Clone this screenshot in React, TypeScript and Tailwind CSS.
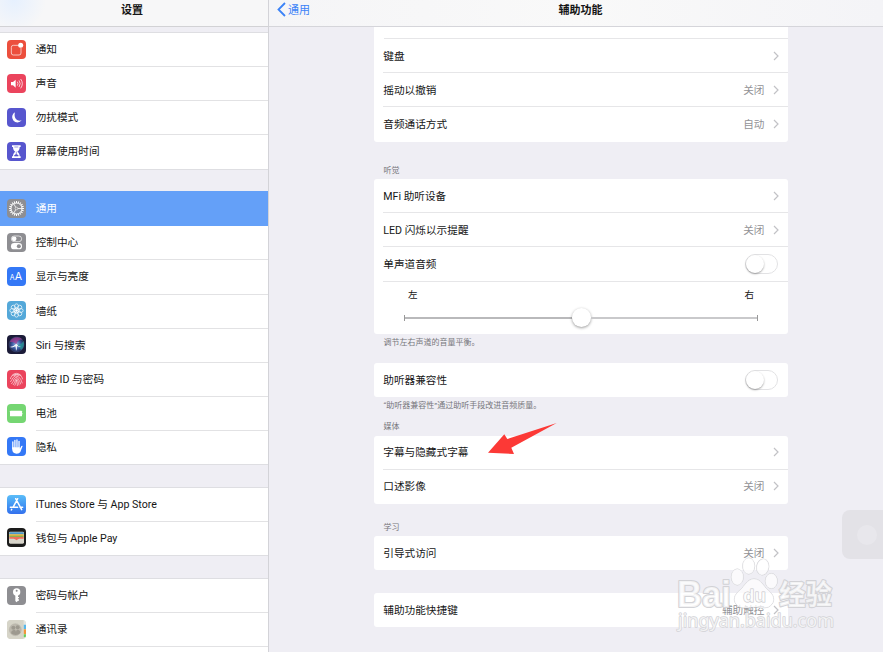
import type { ReactNode } from "react";
import clsx from "clsx";

type Item = { label: string; icon: ReactNode; bg: string; active?: boolean };

const rays = (n: number) => Array.from({ length: n }, (_, i) => (i * 360) / n);

const NotificationIcon = () => (
  <>
    <path d="M34 16H19a6 6 0 0 0-6 6v17a6 6 0 0 0 6 6h17a6 6 0 0 0 6-6V24" fill="none" stroke="#fff" strokeWidth="2" />
    <circle cx="41" cy="16" r="7.5" fill="#fff" />
  </>
);

const SoundIcon = () => (
  <>
    <path d="M12 24h6l8-7v24l-8-7h-6z" fill="#fff" />
    <path d="M31 23q4 6 0 12M36 19q7 10 0 20M41 15q10 14 0 28" fill="none" stroke="#fff" strokeWidth="2.2" />
  </>
);

const MoonIcon = () => (
  <path d="M24 13a16 16 0 1 0 20 24C30 42 19 29 24 13z" fill="#fff" />
);

const HourglassIcon = () => (
  <>
    <path d="M15 10h26v5h-3c0 8-3 11-7 14 4 3 7 6 7 14h3v5H15v-5h3c0-8 3-11 7-14-4-3-7-6-7-14h-3z" fill="#fff" />
    <path d="M22 15h12M28 29v8M22 42c1-3 4-4 6-5 2 1 5 2 6 5z" fill="#5756ce" stroke="#5756ce" strokeWidth="1.8" />
  </>
);

const GearIcon = () => (
  <>
    <g stroke="#fff" strokeWidth="3">
      {rays(20).map((a) => (
        <path key={a} d="M28.5 6v6" transform={`rotate(${a} 28.5 28.5)`} />
      ))}
    </g>
    <circle cx="28.5" cy="28.5" r="16.5" fill="none" stroke="#fff" strokeWidth="3" />
    <circle cx="28.5" cy="28.5" r="4" fill="none" stroke="#fff" strokeWidth="1.5" />
    <path d="M32 28.5h13M26.5 25.5 20 14M26.5 31.5 20 43" stroke="#fff" strokeWidth="2.4" />
  </>
);

const ControlIcon = () => (
  <>
    <rect x="13" y="9" width="31" height="17" rx="8.5" fill="none" stroke="#fff" strokeWidth="2" />
    <circle cx="21.5" cy="17.5" r="7" fill="#fff" />
    <rect x="12" y="30" width="33" height="19" rx="9.5" fill="#fff" />
    <circle cx="35.5" cy="39.5" r="6" fill="#8e8e92" />
  </>
);

const TextSizeIcon = () => (
  <g fill="#fff" className="font-['Inter']">
    <text x="8" y="38" fontSize="21">A</text>
    <text x="23" y="38" fontSize="32">A</text>
  </g>
);

const WallpaperIcon = () => (
  <g fill="none" stroke="#fff" strokeWidth="2">
    {rays(8).map((a) => (
      <ellipse key={a} cx="28.5" cy="16" rx="6" ry="7.5" transform={`rotate(${a} 28.5 28.5)`} />
    ))}
    <circle cx="28.5" cy="28.5" r="8" />
    <circle cx="28.5" cy="28.5" r="3" fill="#fff" />
  </g>
);

const SiriIcon = () => (
  <>
    <defs>
      <radialGradient id="siri">
        <stop offset="0" stopColor="#9db8e4" />
        <stop offset="0.55" stopColor="#3d5fa6" />
        <stop offset="1" stopColor="#20264e" />
      </radialGradient>
    </defs>
    <circle cx="28.5" cy="28.5" r="23" fill="url(#siri)" />
    <path d="M8 22C14 5 38 2 46 14 38 13 30 18 28 28 21 21 14 20 8 22z" fill="#a8388f" opacity=".7" />
    <path d="M49 18c5 12 0 22-7 27-3-6-7-12-13-16 9 1 17-3 20-11z" fill="#289b9a" opacity=".75" />
    <path d="M8 36q12-1 20-10 5 10 18 8-10 3-16-1 1 9-3 15 0-9-2-14-7 5-17 2z" fill="#fff" opacity=".9" />
    <circle cx="28.5" cy="28.5" r="22.5" fill="none" stroke="#7186b5" strokeWidth="1" opacity=".6" />
  </>
);

const FingerprintIcon = () => (
  <g fill="none" stroke="#fff" strokeWidth="1.9" opacity=".9">
    <path d="M14 17Q28 3 43 17M10 27Q13 14 28 13T47 28M10 36Q16 28 17 24 24 13 34 20 42 25 46 40" />
    <path d="M13 42Q20 34 21 27 28 17 34 27 40 36 41 43M18 45Q25 36 25 29 28 23 31 29 36 38 36 46M23 47Q28 40 28 29 32 40 31 48" />
    <path d="M20 17q8-6 17 0" />
  </g>
);

const BatteryIcon = () => (
  <>
    <rect x="9" y="20" width="36" height="17" rx="2" fill="#fff" />
    <path d="M46.5 25.5q4 3.5 0 7z" fill="#fff" />
  </>
);

const HandIcon = () => (
  <>
    <g stroke="#fff" strokeWidth="3.8" strokeLinecap="round">
      <path d="M17.5 15v20M23.7 10v22M29.9 9v22M36.1 13v22" />
    </g>
    <path d="M15.6 31H38v5l5-9q3-2 4 0l-7 18q-3 5-11 5-13 0-13.4-13z" fill="#fff" />
  </>
);

const AppStoreIcon = () => (
  <g stroke="#fff" strokeWidth="4.4" strokeLinecap="round" fill="none">
    <path d="M32 11 18 37M26 11l16 29 2 4M10 37h22M39 37h8M14 43l-1 2" />
  </g>
);

const WalletIcon = () => (
  <>
    <rect x="6" y="11" width="45" height="36" rx="4" fill="#d8d5cb" />
    <path d="M7 16q0-3 3-3h37q3 0 3 3v3H7z" fill="#4a96c9" />
    <path d="M7 19h43v5H7z" fill="#e0b53e" />
    <path d="M7 23h43v4H7z" fill="#8fae50" />
    <path d="M7 27h43v5H37q-3 0-4 2-4 5-9 0-1-2-4-2H7z" fill="#ee6e5b" />
  </>
);

const KeyIcon = () => (
  <>
    <circle cx="29" cy="18" r="11" fill="#fff" />
    <path d="M25 26h8v18l-4 5-4-4z M32 33h4v4h-4z M32 40h4v4h-4z" fill="#fff" />
    <circle cx="29" cy="14" r="3" fill="#8e8e92" />
  </>
);

const ContactsIcon = () => (
  <>
    <path d="M49 0h8v57h-8z" fill="#e5e5df" />
    <path d="M50 14h7v13h-7z" fill="#58b7ea" />
    <path d="M50 28h7v14h-7z" fill="#f1963b" />
    <path d="M50 43h7v9h-7z" fill="#69cc58" />
    <path d="M0 0h49v57H0z" fill="#d6d4c8" />
    <circle cx="25" cy="29" r="18" fill="#bdb9ae" stroke="#aaa79d" />
    <circle cx="19" cy="23" r="6" fill="#9d998f" />
    <circle cx="32" cy="22" r="6" fill="#9d998f" />
    <path d="M12 40q1-9 6-9l4-2q5 1 5 7 0-5 3-7h5q5 2 5 10-6 6-14 6T12 40z" fill="#9d998f" />
  </>
);

const groups: Item[][] = [
  [
    { label: "通知", icon: <NotificationIcon />, bg: "bg-[#ec4f3d]" },
    { label: "声音", icon: <SoundIcon />, bg: "bg-[#eb445d]" },
    { label: "勿扰模式", icon: <MoonIcon />, bg: "bg-[#5756ce]" },
    { label: "屏幕使用时间", icon: <HourglassIcon />, bg: "bg-[#5756ce]" },
  ],
  [
    { label: "通用", icon: <GearIcon />, bg: "bg-[#8e8e92]", active: true },
    { label: "控制中心", icon: <ControlIcon />, bg: "bg-[#8e8e92]" },
    { label: "显示与亮度", icon: <TextSizeIcon />, bg: "bg-[#3478f6]" },
    { label: "墙纸", icon: <WallpaperIcon />, bg: "bg-[#54a8d9]" },
    { label: "Siri 与搜索", icon: <SiriIcon />, bg: "bg-[#1b1b38]" },
    { label: "触控 ID 与密码", icon: <FingerprintIcon />, bg: "bg-[#eb445d]" },
    { label: "电池", icon: <BatteryIcon />, bg: "bg-[#75d672]" },
    { label: "隐私", icon: <HandIcon />, bg: "bg-[#3478f6]" },
  ],
  [
    { label: "iTunes Store 与 App Store", icon: <AppStoreIcon />, bg: "bg-linear-to-b from-[#5bbdf8] to-[#3470ed]" },
    { label: "钱包与 Apple Pay", icon: <WalletIcon />, bg: "bg-[#1c1c1c]" },
  ],
  [
    { label: "密码与帐户", icon: <KeyIcon />, bg: "bg-[#8e8e92]" },
    { label: "通讯录", icon: <ContactsIcon />, bg: "bg-[#d6d4c8]" },
    { label: "", icon: null, bg: "bg-white" },
  ],
];

function SidebarRow({ item, last }: { item: Item; last: boolean }) {
  return (
    <div
      className={clsx(
        "flex shrink-0 items-center pl-[6.7px]",
        last ? "h-[33.15px]" : "h-[34.15px]",
        item.active ? "bg-[#64a0f8] text-white" : "bg-white"
      )}
    >
      <span className={clsx("mb-[1.6px] h-[19px] w-[19px] shrink-0 overflow-hidden rounded-[4px]", item.bg)}>
        <svg viewBox="0 0 57 57" className="block h-[19px] w-[19px]">{item.icon}</svg>
      </span>
      <div
        className={clsx(
          "ml-[10px] flex h-full flex-1 items-center pt-[0.8px]",
          !last && "border-b",
          item.active ? "border-transparent" : "border-[#e2e2e4]"
        )}
      >
        {item.label}
      </div>
    </div>
  );
}

function Sidebar() {
  return (
    <aside className="flex h-full w-[269px] shrink-0 flex-col overflow-hidden border-r border-[#d3d3d8]">
      <header className="flex h-[27px] shrink-0 justify-center border-b border-[#d2d2d5] bg-[#f7f7f8] bg-[radial-gradient(circle_at_14px_0px,#e6f0fe,#f7f7f800_32px)] pr-[4px] pt-[3px] text-[11px] font-bold">
        设置
      </header>
      <div className="flex flex-col gap-[21.6px] pt-[5px]">
        {groups.map((group, i) => (
          <div key={i} className={clsx("border-y border-b-[#dedee2]", group[0].active ? "border-t-[#64a0f8]" : "border-t-[#dedee2]")}>
            {group.map((item, j) => (
              <SidebarRow key={j} item={item} last={j === group.length - 1} />
            ))}
          </div>
        ))}
      </div>
    </aside>
  );
}

const Chevron = () => (
  <svg viewBox="0 0 6 10" className="ml-[8px] h-[10px] w-[6px]">
    <path d="m1 1 4 4-4 4" fill="none" stroke="#c2c2c6" strokeWidth="1.2" />
  </svg>
);

const Toggle = () => (
  <span className="mr-[0.8px] flex h-[20px] w-[33px] rounded-full border border-[#e2e2e4] bg-white">
    <span className="h-[18px] w-[18px] rounded-full bg-white shadow-[0_1px_2px_rgba(0,0,0,0.35)]" />
  </span>
);

function Row({ label, value, toggle, last }: { label: string; value?: string; toggle?: boolean; last?: boolean }) {
  return (
    <div className={clsx("ml-[9.3px] flex h-[34.2px] items-center border-b pr-[9.5px]", last ? "border-transparent" : "border-[#e6e6e8]")}>
      <span className="flex-1 pt-[2px]">{label}</span>
      {value && <span className="pt-[2px] text-[#929296]">{value}</span>}
      {toggle ? <Toggle /> : <Chevron />}
    </div>
  );
}

function Card({ children }: { children: ReactNode }) {
  return <section className="overflow-hidden rounded-[3px] bg-white">{children}</section>;
}

function Note({ children, className }: { children: ReactNode; className: string }) {
  return <p className={clsx("flex items-center pl-[9.5px] text-[8px] leading-none text-[#77777c]", className)}>{children}</p>;
}

function Balance() {
  return (
    <div className="h-[52.5px] px-[30px] pt-[5px]">
      <div className="flex justify-between pl-[4px] pr-[4px] text-[9.5px] leading-[15px]">
        <span>左</span>
        <span>右</span>
      </div>
      <div className="mt-[6.6px] flex h-[19px] items-center">
        <span className="h-[6px] w-px bg-[#999]" />
        <span className="h-[2px] flex-1 bg-[#b9b9bb]" />
        <span className="h-[19px] w-[19px] rounded-full bg-white shadow-[0_1px_3px_rgba(0,0,0,0.4)]" />
        <span className="h-[2px] flex-1 bg-[#c9c9cb]" />
        <span className="h-[6px] w-px bg-[#999]" />
      </div>
    </div>
  );
}

function Detail() {
  return (
    <main className="flex min-w-0 flex-1 flex-col">
      <header className="grid h-[27px] shrink-0 grid-cols-3 border-b border-[#d5d5da] bg-linear-to-r from-[#f5f5f7] via-[#f9f9f9] to-[#f4f4f7] pt-[2px] text-[11px]">
        <div className="flex items-start text-[#3b82f7]">
          <svg viewBox="0 0 9 15" className="ml-[7.5px] mr-[2.5px] h-[15px] w-[9px]">
            <path d="M8 1 1.5 7.5 8 14" fill="none" stroke="currentColor" strokeWidth="1.8" />
          </svg>
          <span className="pt-px">通用</span>
        </div>
        <h1 className="pl-[9px] pt-px text-center font-bold">辅助功能</h1>
      </header>
      <div className="ml-[105px] w-[414px]">
        <section className="rounded-b-[3px] bg-white">
          <div className="ml-[9.5px] h-[12px] border-b border-[#e6e6e8]" />
          <Row label="键盘" />
          <Row label="摇动以撤销" value="关闭" />
          <Row label="音频通话方式" value="自动" last />
        </section>
        <Note className="h-[37.4px] pt-[21.5px]">听觉</Note>
        <Card>
          <Row label="MFi 助听设备" />
          <Row label="LED 闪烁以示提醒" value="关闭" />
          <Row label="单声道音频" toggle />
          <Balance />
        </Card>
        <Note className="h-[29px] pb-[10.8px]">调节左右声道的音量平衡。</Note>
        <Card>
          <Row label="助听器兼容性" toggle last />
        </Card>
        <Note className="h-[19px] pb-[0.8px]">“助听器兼容性”通过助听手段改进音频质量。</Note>
        <Note className="h-[19.3px] pt-[1.5px]">媒体</Note>
        <Card>
          <Row label="字幕与隐藏式字幕" />
          <Row label="口述影像" value="关闭" last />
        </Card>
        <Note className="h-[32.1px] pt-[15.5px]">学习</Note>
        <Card>
          <Row label="引导式访问" value="关闭" last />
        </Card>
        <div className="h-[22.8px]" />
        <Card>
          <Row label="辅助功能快捷键" value="辅助触控" last />
        </Card>
      </div>
    </main>
  );
}

const Watermark = () => (
  <svg viewBox="0 0 170 80" className="absolute left-[670px] top-[555px] h-[80px] w-[170px]">
    <g fill="#fff" fillOpacity=".72" stroke="#d2d2d6" strokeWidth="1" strokeLinejoin="round" paintOrder="stroke">
      <ellipse cx="67.3" cy="22" rx="6" ry="8" />
      <ellipse cx="78.7" cy="11" rx="6" ry="8" />
      <ellipse cx="92.7" cy="12" rx="6" ry="8" transform="rotate(10 92.7 12)" />
      <ellipse cx="101.3" cy="26" rx="6" ry="7.5" />
      <path d="M84 24C77 24 75 31 70 35c-6 5-7 10-4 14 4 6 12 3 18 3s14 3 18-3c3-4 2-9-4-14-5-4-7-11-14-11z" />
      <g className="font-['Liberation_Sans','Noto_Sans_CJK_SC',sans-serif] font-bold" strokeWidth="2.2">
        <text x="7" y="52" fontSize="37" textLength="54" lengthAdjust="spacingAndGlyphs">Bai</text>
        <text x="109" y="50" fontSize="28" textLength="53" lengthAdjust="spacingAndGlyphs">经验</text>
      </g>
      <text x="73" y="47" fontSize="19" textLength="23" lengthAdjust="spacingAndGlyphs" className="font-['Liberation_Sans'] font-bold" stroke="#c6c6ca">du</text>
      <text x="8" y="72" fontSize="18" textLength="156" lengthAdjust="spacingAndGlyphs" className="font-['Noto_Sans']" strokeWidth="1.4">jingyan.baidu.com</text>
    </g>
  </svg>
);

export default function App() {
  return (
    <div className="relative flex h-[652px] w-[883px] overflow-hidden bg-[#efeef4] font-['Roboto','Noto_Sans_CJK_SC',sans-serif] text-[10.65px] leading-[16px] text-[#161616]">
      <Sidebar />
      <Detail />
      <svg viewBox="0 0 70 32" className="absolute left-[487px] top-[423px] h-[32px] w-[70px]">
        <path d="M1 29.7 17.3 11.3 20.3 16 69.7 0 24.3 24.7 27 31z" fill="#fc3936" />
      </svg>
      <div className="absolute left-[842px] top-[510px] flex h-[49px] w-[49px] items-center justify-center rounded-[8px] bg-[#e3e2e7]">
        <span className="h-[20px] w-[20px] rounded-full bg-[#e8e7ec]" />
      </div>
      <Watermark />
    </div>
  );
}
